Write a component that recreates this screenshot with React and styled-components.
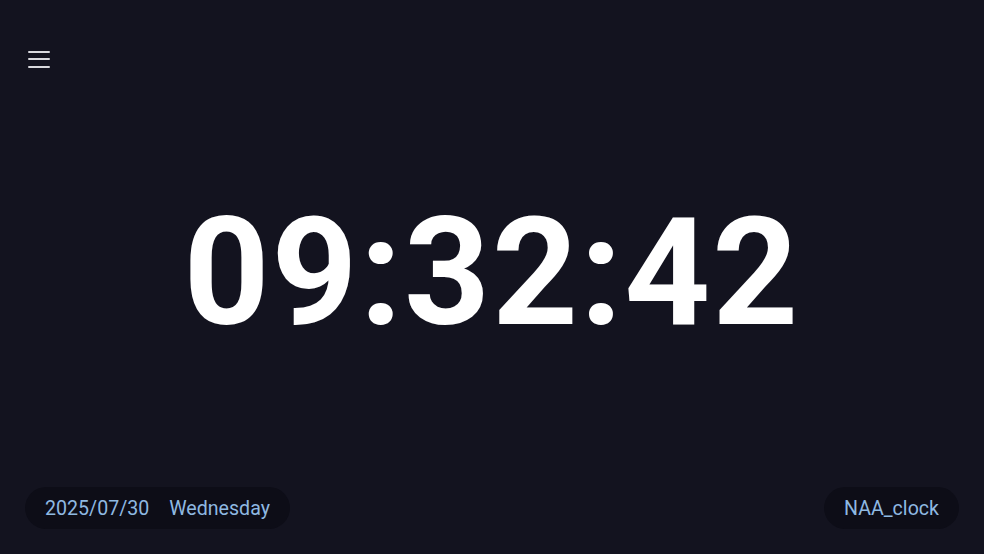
import styled, { createGlobalStyle } from "styled-components";

const GlobalStyle = createGlobalStyle`
  html, body, #root {
    margin: 0;
    padding: 0;
    height: 100%;
  }
  body {
    background: #13131f;
    font-family: Roboto, "Liberation Sans", sans-serif;
    overflow: hidden;
  }
`;

const Screen = styled.div`
  height: 100vh;
  display: flex;
  flex-direction: column;
  padding: 40px 25px 25px 25px;
  box-sizing: border-box;
`;

const TopBar = styled.div`
  display: flex;
  align-items: center;
`;

const MenuButton = styled.button`
  width: 28px;
  height: 38px;
  padding: 0;
  margin: 0;
  border: none;
  background: none;
  display: flex;
  flex-direction: column;
  justify-content: center;
  gap: 5.5px;
  cursor: pointer;
`;

const MenuLine = styled.span`
  display: block;
  width: 22px;
  height: 2px;
  margin-left: 3px;
  background: #d9d9de;
  border-radius: 1px;
`;

const ClockArea = styled.main`
  flex: 1;
  display: flex;
  align-items: center;
  justify-content: center;
  padding-bottom: 20px;
`;

const Time = styled.h1`
  margin: 0;
  color: #ffffff;
  font-family: Roboto, "Liberation Sans", sans-serif;
  font-weight: 700;
  font-size: 150px;
  line-height: 1;
  letter-spacing: 2px;
  font-variant-numeric: tabular-nums;
`;

const BottomBar = styled.footer`
  display: flex;
  justify-content: space-between;
  align-items: center;
`;

const Pill = styled.div`
  display: flex;
  align-items: center;
  gap: 20px;
  height: 42px;
  padding: 0 20px;
  border-radius: 21px;
  background: #0d0d17;
  color: #8fb9e2;
  font-size: 19.6px;
`;

export default function App() {
  return (
    <>
      <GlobalStyle />
      <Screen>
        <TopBar>
          <MenuButton aria-label="menu">
            <MenuLine />
            <MenuLine />
            <MenuLine />
          </MenuButton>
        </TopBar>
        <ClockArea>
          <Time>09:32:42</Time>
        </ClockArea>
        <BottomBar>
          <Pill>
            <span>2025/07/30</span>
            <span>Wednesday</span>
          </Pill>
          <Pill>NAA_clock</Pill>
        </BottomBar>
      </Screen>
    </>
  );
}
